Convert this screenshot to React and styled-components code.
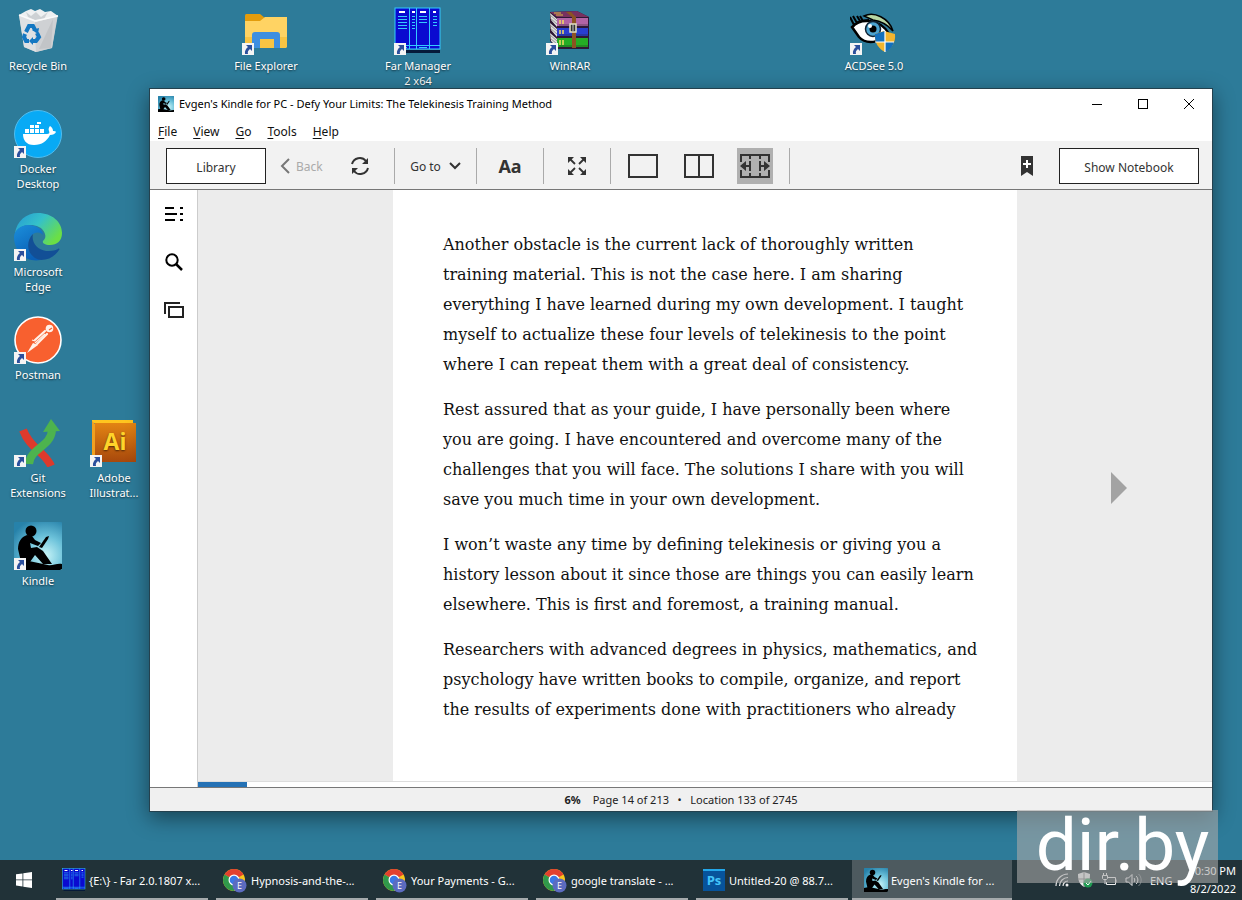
import React from "react";

import styled, { createGlobalStyle } from "styled-components";


const GlobalStyle = createGlobalStyle`
*{
    box-sizing: border-box;
}
body{
    margin: 0;
    font-family: "Noto Sans", "Open Sans", sans-serif;
    font-size: 11px;
}
button{
    font: inherit;
    color: inherit;
    border: none;
    background: none;
    padding: 0;
}
`;

const Desktop = styled.div`
position: relative;
min-height: 100vh;
display: flex;
flex-direction: column;
background: #2d7b99;
overflow: hidden;
`;

const IconGrid = styled.div`
flex: 1;
display: grid;
grid-template-columns: repeat(auto-fill, 76px);
grid-auto-rows: 103px;
`;

const Shortcut = styled.button`
grid-column: ${props => props.$col};
grid-row: ${props => props.$row};
display: flex;
flex-direction: column;
align-items: center;
gap: 3px;
padding-top: 7px;
color: white;
line-height: 15px;
text-align: center;
text-shadow: 0 1px 2px rgba(0, 0, 0, 0.6);
`;

const ShortcutArt = styled.span`
position: relative;
width: 48px;
height: 48px;
svg{
    display: block;
}
`;

const Badge = styled.span`
position: absolute;
left: 0;
bottom: 0;
`;

const AppWindow = styled.section`
position: absolute;
top: 88px;
left: 149px;
right: 29px;
bottom: 88px;
display: flex;
flex-direction: column;
background: white;
border: 1px solid #24414e;
box-shadow: 0 6px 20px rgba(0, 0, 0, 0.45);
`;

const TitleBar = styled.header`
display: flex;
align-items: center;
height: 29px;
padding-left: 8px;
color: black;
h1{
    flex: 1;
    margin: 0 0 0 5px;
    font-size: 11px;
    font-weight: 400;
}
`;

const WindowButton = styled.button`
display: flex;
align-items: center;
justify-content: center;
width: 46px;
height: 29px;
`;

const MenuBar = styled.nav`
display: flex;
align-items: center;
gap: 16px;
height: 23px;
padding: 4px 0 0 8px;
color: #111;
font-size: 12px;
`;

const Mnemonic = styled.span`
text-decoration: underline;
text-underline-offset: 2px;
`;

const Toolbar = styled.div`
display: flex;
align-items: center;
height: 49px;
padding: 2px 13px 0 16px;
background: #f2f2f2;
border-bottom: 1px solid #777;
color: #333;
font-size: 12px;
`;

const ToolGroup = styled.div`
display: flex;
align-items: center;
justify-content: center;
height: 36px;
gap: ${props => props.$gap || 0}px;
min-width: ${props => props.$width || 0}px;
padding: ${props => props.$pad || "0"};
border-right: 1px solid #aaa;
`;

const OutlineButton = styled.button`
width: ${props => props.$width}px;
height: 36px;
padding-top: 2px;
background: white;
border: 1px solid #222;
`;

const ToolButton = styled.button`
display: flex;
align-items: center;
justify-content: center;
gap: 8px;
min-width: 36px;
height: 36px;
background: ${props => (props.$active ? "#b0b0b0" : "transparent")};
`;

const BackButton = styled(ToolButton)`
justify-content: flex-start;
gap: 6px;
width: 48px;
color: #aaa;
`;

const FontButton = styled(ToolButton)`
font-size: 18px;
font-weight: 700;
`;

const ToolEnd = styled.div`
display: flex;
align-items: center;
gap: 14px;
margin-left: auto;
`;

const Reader = styled.div`
flex: 1;
display: flex;
min-height: 0;
`;

const SideBar = styled.aside`
display: flex;
flex-direction: column;
align-items: center;
gap: 12px;
width: 48px;
padding-top: 6px;
border-right: 1px solid #ccc;
`;

const ReaderMain = styled.div`
flex: 1;
display: flex;
flex-direction: column;
`;

const BookArea = styled.div`
flex: 1;
display: grid;
grid-template-columns: 1fr 624px 1fr;
background: #ececec;
border-bottom: 1px solid #ddd;
`;

const BookPage = styled.article`
grid-column: 2;
padding: 40px 50px;
background: white;
color: #111;
font-family: "DejaVu Serif", serif;
font-size: 16px;
line-height: 30px;
white-space: nowrap;
p{
    margin: 0 0 15px;
}
`;

const Line = styled.span`
display: block;
`;

const NextPage = styled.button`
align-self: center;
justify-self: center;
width: 32px;
height: 32px;
margin: 4px 0 0 8px;
svg{
    display: block;
    margin: auto;
}
`;

const ProgressTrack = styled.div`
height: 5px;
background: white;
`;

const ProgressFill = styled.div`
width: 49px;
height: 5px;
background: #2471b5;
`;

const StatusBar = styled.footer`
display: flex;
align-items: center;
justify-content: center;
gap: 12px;
height: 24px;
background: #f0f0f0;
border-top: 1px solid #777;
color: #222;
`;

const TaskBar = styled.footer`
display: flex;
height: 40px;
background: #213238;
color: white;
`;

const StartButton = styled.button`
display: flex;
align-items: center;
justify-content: center;
width: 48px;
margin-right: 4px;
`;

const TaskButton = styled.button`
display: flex;
align-items: center;
width: 160px;
background: ${props => (props.$active ? "#4d5a5f" : "transparent")};
padding: ${props => (props.$active ? "0" : "0 4px")};
`;

const TaskInner = styled.span`
flex: 1;
display: flex;
align-items: center;
gap: 3px;
height: 40px;
padding: 2px 0 0 ${props => (props.$active ? 12 : 6)}px;
border-bottom: 2px solid #a5aaac;
white-space: nowrap;
svg{
    flex: none;
}
`;

const Tray = styled.div`
display: flex;
align-items: center;
gap: 8px;
margin-left: auto;
padding-right: 6px;
`;

const Clock = styled.div`
display: flex;
flex-direction: column;
align-items: flex-end;
margin-left: 8px;
line-height: 18px;
`;

const Watermark = styled.div`
position: absolute;
right: 24px;
bottom: 17px;
width: 201px;
height: 73px;
padding-left: 10px;
background: rgba(169, 169, 169, 0.6);
color: white;
font-family: Roboto, sans-serif;
font-size: 73px;
line-height: 70px;
text-align: center;
`;


const ShortcutArrow = () => (
    <svg width="12" height="12" viewBox="0 0 12 12">
        <rect width="12" height="12" fill="#f4f4f4" />
        <path d="M4 2h6v6L8 6C6 7.5 5.5 9 6 11H3C2.5 8 4 5.500 6 4z" fill="#2b4f9c" />
    </svg>
);

const RecycleArt = () => (
    <svg width="48" height="48" viewBox="0 0 48 48">
        <path d="M5 8l39 0-6 33-16 4-12-5z" fill="#c9cccf" />
        <path d="M5 8l16 5 1 32-12-5z" fill="#dfe1e3" />
        <path d="M21 13l22-4-5 32-16 4z" fill="#cfd1d4" />
        <path d="M25 42l14-30-2 29z" fill="#bcbfc2" opacity=".7" />
        <path d="M5 8l7-4 5-2 4 2 5-2 5 3 6-1 7 5-22 6z" fill="#eef0f1" />
        <path d="M12 5l5 4 5-4 5 5 7-5-4 7-9 1-7-3z" fill="#cdd1d4" />
        <path d="M5 8l16 6 23-5" fill="none" stroke="#fafafa" strokeWidth="1.400" />
        <g fill="none" stroke="#1578c2" strokeWidth="4">
            <path d="M12 25l3-6h4l2 4" />
            <path d="M23 26l2 4-3 4h-4" />
            <path d="M15 34h-3l-2-4 1-3" />
        </g>
        <path d="M18 23l7-2-1 6zM19 30v8l-4-4z" fill="#1578c2" />
    </svg>
);

const DockerArt = () => (
    <svg width="48" height="48" viewBox="0 0 48 48">
        <circle cx="24" cy="24" r="23.500" fill="#08aaf5" stroke="#4fbdf0" />
        <path d="M9 24h24c2 0 3-1 2-3-1-2 0-4 1-5 2 1 3 3 3 5 1 0 3 0 3 1-1 2-3 3-6 3-3 6-8 10-16 10-8 0-11-5-11-11z" fill="white" />
        <g fill="white">
            <rect x="11" y="19" width="4" height="4" />
            <rect x="16" y="19" width="4" height="4" />
            <rect x="21" y="19" width="4" height="4" />
            <rect x="26" y="19" width="4" height="4" />
            <rect x="16" y="15" width="4" height="3" />
            <rect x="21" y="15" width="4" height="3" />
            <rect x="23" y="12" width="4" height="2" />
        </g>
    </svg>
);

const EdgeArt = () => (
    <svg width="48" height="48" viewBox="0 0 48 48">
        <defs>
            <linearGradient id="edgeTop" x1="0" y1="0" x2="1" y2="0.6">
                <stop offset="0" stopColor="#2499d5" />
                <stop offset="0.500" stopColor="#35c1c9" />
                <stop offset="1" stopColor="#6bdf45" />
            </linearGradient>
            <linearGradient id="edgeLeft" x1="0" y1="0" x2="0.5" y2="1">
                <stop offset="0" stopColor="#1b8fdb" />
                <stop offset="1" stopColor="#0a5fb5" />
            </linearGradient>
        </defs>
        <path d="M1 20C3 8 12 0 24 0c14 0 24 9 24 20 0 8-5 12-12 12-5 0-8-2-7-4 2-2 3-4 2-7C29 14 22 12 16 12 9 12 4 15 1 20z" fill="url(#edgeTop)" />
        <path d="M0 24c0-7 7-12 14-12 8 0 15 4 15 10-2-3-8-4-12 1-5 7-1 18 10 24C11 50 0 38 0 24z" fill="url(#edgeLeft)" />
        <path d="M19 21c-9 9-5 24 8 26 8 0 14-4 18-10 1-1 0-2-1-1-4 2-8 2-12 2-9-1-15-9-13-17z" fill="#124f96" />
    </svg>
);

const PostmanArt = () => (
    <svg width="48" height="48" viewBox="0 0 48 48">
        <circle cx="24" cy="24" r="23" fill="#f8602f" stroke="white" strokeWidth="1.600" />
        <circle cx="35.500" cy="12.500" r="3.800" fill="#fff1e8" />
        <path d="M35 14l3-2" stroke="#f8602f" strokeWidth="1.200" />
        <g stroke="#fff1e8" strokeWidth="2.200" strokeLinecap="round">
            <path d="M31 15L21 24" />
            <path d="M33 18L23 28" />
        </g>
        <path d="M31 18L21 27M18 24l3 1" stroke="#fff1e8" strokeWidth="1.200" />
        <path d="M19 27l5 2-11 8z" fill="#fff1e8" />
    </svg>
);

const GitArt = () => (
    <svg width="48" height="48" viewBox="0 0 48 48">
        <path d="M9 11c5 13 13 18 19 24 4 4 7 7 9 12" fill="none" stroke="#dd3a2c" strokeWidth="8" />
        <path d="M15 45c1-16 22-17 23-34" fill="none" stroke="#4db34e" strokeWidth="8" />
        <path d="M29 13l8-13 9 12z" fill="#4db34e" />
    </svg>
);

const IllustratorArt = () => (
    <svg width="48" height="48" viewBox="0 0 48 48">
        <defs>
            <linearGradient id="aiFill" x1="0" y1="0" x2="0" y2="1">
                <stop offset="0" stopColor="#e38413" />
                <stop offset="1" stopColor="#a7480c" />
            </linearGradient>
        </defs>
        <path d="M2 1h41v3H2z" fill="#ffc51f" />
        <path d="M2 2l3 3v38l-3-3z" fill="#f0a020" />
        <rect x="5" y="4" width="41" height="39" fill="url(#aiFill)" />
        <text x="25" y="31" textAnchor="middle" fontFamily="Open Sans" fontWeight="700" fontSize="23" fill="#ffd42a">Ai</text>
    </svg>
);

const KindleArt = ({ size = 48 }) => (
    <svg width={size} height={size} viewBox="0 0 48 48">
        <defs>
            <radialGradient id="kindleSky" cx="0.65" cy="0.7" r="0.8">
                <stop offset="0" stopColor="#c9f5f8" />
                <stop offset="0.500" stopColor="#6cc2da" />
                <stop offset="1" stopColor="#2782aa" />
            </radialGradient>
        </defs>
        <rect width="48" height="48" rx="1" fill="url(#kindleSky)" />
        <circle cx="17" cy="9" r="5.500" fill="black" />
        <path d="M13 13C7 15 4 20 4 27l3 13h9l5-7 8 9h9l-9-13-6-4-6 1-1-5 8 3 3-3-6-3-3-4z" fill="black" />
        <path d="M25 25l7-10 3-1-1 3-6 9z" fill="black" />
        <path d="M0 40l10-2 24 5c4 1 9-2 14-1v5l-2 1H0z" fill="black" />
    </svg>
);

const ExplorerArt = () => (
    <svg width="48" height="48" viewBox="0 0 48 48">
        <path d="M3 9c0-2 1-2 2-2h13l5 4-3 7H3z" fill="#e39c0c" />
        <path d="M3 14h15l5-4h22v29c0 1-1 2-2 2H3z" fill="#ffd363" />
        <path d="M3 30h42v9c0 1-1 2-2 2H3z" fill="#f8c443" />
        <path d="M10 41V28c0-2 1-3 3-3h22c2 0 3 1 3 3v13h-6v-9H18v9z" fill="#3f8fe0" />
    </svg>
);

const FarArt = ({ size = 48 }) => (
    <svg width={size} height={size} viewBox="0 0 48 48">
        <path d="M3 43h43v3H3z" fill="#061a3a" />
        <rect x="1" y="1" width="45" height="41" fill="#0a0ad0" stroke="#35c9ff" />
        <g stroke="#35c9ff" fill="none">
            <path d="M15.500 1v41M22.500 1v41M35.500 1v41M1 38.500h45" />
            <path d="M4 9.500h9M4 12.500h9M4 15.500h9M4 18.500h9M4 21.500h9M18 9.500h3M18 12.500h3M18 15.500h3M18 18.500h3M18 21.500h3M25 9.500h8M25 12.500h8M25 15.500h8M39 9.500h4M39 12.500h4M39 15.500h4M39 18.500h4" />
            <path d="M4 40.500h9M25 40.500h8" />
        </g>
        <path d="M5 5h6M18 5h3M26 5h6M39 5h3" stroke="white" strokeWidth="2" />
    </svg>
);

const WinRarArt = () => (
    <svg width="48" height="48" viewBox="0 0 48 48">
        <path d="M4 5l27-1 12 6v32H11L4 34z" fill="#2d1835" />
        <path d="M4 5l27-1 12 6H11z" fill="#78305f" />
        <path d="M4 6l7 6v8l-6-7zM4 16l7 6v8l-6-7zM4 26l7 6v8l-6-6z" fill="#dedede" />
        <path d="M4 8l7 6M4 11l7 6M4 18l7 6M4 21l7 6M4 28l7 6M4 31l7 6" stroke="#777" strokeWidth=".7" />
        <rect x="11" y="11" width="31" height="8" fill="#b264a5" />
        <rect x="11" y="21" width="31" height="8" fill="#293fd0" />
        <rect x="11" y="31" width="31" height="9" fill="#25ad25" />
        <path d="M13 18h29M13 28h29M13 39h29" stroke="#222" strokeOpacity=".5" />
        <path d="M14 13v4M17 13v4M14 23v4M17 23v4M14 33v5M17 33v5" stroke="#f4dc62" strokeWidth="1.500" />
        <path d="M20 5l6 5v31h4V10l-5-5z" fill="#8c5322" />
        <rect x="24" y="17" width="6" height="8" fill="#333" stroke="#e6e3c4" strokeWidth="1.500" />
        <path d="M27 17v7" stroke="#ccc" />
        <path d="M8 6h7M10 8h7" stroke="#d9bd44" />
    </svg>
);

const AcdArt = () => (
    <svg width="48" height="48" viewBox="0 0 48 48">
        <path d="M14 9c10-5 25 2 29 15-6-7-12-10-20-11z" fill="#b8d6a2" stroke="black" strokeWidth="1.500" />
        <path d="M2 20c8-9 28-9 37 7-9 9-23 11-30 3z" fill="white" stroke="black" strokeWidth="2.500" />
        <circle cx="23" cy="22" r="7.500" fill="#4ba3d0" stroke="#123" strokeWidth="1.500" />
        <circle cx="23" cy="22" r="3.500" fill="black" />
        <circle cx="20" cy="19" r="2" fill="white" />
        <path d="M3 20C6 14 12 13 19 13M4 18L0 10M7 16L3 9M10 14L7 9M13 14l-3-5" stroke="black" strokeWidth="2" fill="none" />
        <path d="M25 27l9-3 11 3c1 9-4 15-10 18-6-3-11-9-10-18z" fill="#f3b52f" />
        <path d="M25 27l10-3v11h-9c-1-2-1-5-1-8zM35 35h9c-1 4-4 8-9 10z" fill="#1470bd" />
        <path d="M35 24v21M25 35h19" stroke="white" strokeWidth="1.200" />
    </svg>
);

const ChromeArt = () => (
    <svg width="26" height="26" viewBox="0 0 26 26">
        <circle cx="12" cy="13" r="11" fill="#f8c51c" />
        <path d="M12 13L2.500 7.500a11 11 0 0 1 19 0z" fill="#e2402f" />
        <path d="M12 13L2.500 7.500A11 11 0 0 0 12 24l4-8z" fill="#30994b" />
        <circle cx="12" cy="13" r="5.500" fill="white" />
        <circle cx="12" cy="13" r="4.300" fill="#3b78e7" />
        <circle cx="17.500" cy="18.500" r="7" fill="#5c6bc0" />
        <text x="17.500" y="22" textAnchor="middle" fontFamily="Open Sans" fontSize="9" fill="white">E</text>
    </svg>
);

const PhotoshopArt = () => (
    <svg width="24" height="24" viewBox="0 0 24 24">
        <rect x="1" y="1" width="22" height="22" fill="#07539b" />
        <path d="M1 1h22v2H1z" fill="#23a7ea" />
        <text x="12" y="17" textAnchor="middle" fontFamily="Open Sans" fontWeight="700" fontSize="13" fill="#43c5fa">Ps</text>
    </svg>
);

const shortcuts = [
    { label: ["Recycle Bin"], Art: RecycleArt, col: 1, row: 1, real: true },
    { label: ["File Explorer"], Art: ExplorerArt, col: 4, row: 1 },
    { label: ["Far Manager", "2 x64"], Art: FarArt, col: 6, row: 1 },
    { label: ["WinRAR"], Art: WinRarArt, col: 8, row: 1 },
    { label: ["ACDSee 5.0"], Art: AcdArt, col: 12, row: 1 },
    { label: ["Docker", "Desktop"], Art: DockerArt, col: 1, row: 2 },
    { label: ["Microsoft", "Edge"], Art: EdgeArt, col: 1, row: 3 },
    { label: ["Postman"], Art: PostmanArt, col: 1, row: 4 },
    { label: ["Git", "Extensions"], Art: GitArt, col: 1, row: 5 },
    { label: ["Adobe", "Illustrat..."], Art: IllustratorArt, col: 2, row: 5 },
    { label: ["Kindle"], Art: KindleArt, col: 1, row: 6 }
];

const paragraphs = [
    [
        "Another obstacle is the current lack of thoroughly written",
        "training material. This is not the case here. I am sharing",
        "everything I have learned during my own development. I taught",
        "myself to actualize these four levels of telekinesis to the point",
        "where I can repeat them with a great deal of consistency."
    ],
    [
        "Rest assured that as your guide, I have personally been where",
        "you are going. I have encountered and overcome many of the",
        "challenges that you will face. The solutions I share with you will",
        "save you much time in your own development."
    ],
    [
        "I won’t waste any time by defining telekinesis or giving you a",
        "history lesson about it since those are things you can easily learn",
        "elsewhere. This is first and foremost, a training manual."
    ],
    [
        "Researchers with advanced degrees in physics, mathematics, and",
        "psychology have written books to compile, organize, and report",
        "the results of experiments done with practitioners who already"
    ]
];

const tasks = [
    { label: "{E:\\} - Far 2.0.1807 x...", art: <FarArt size={24} /> },
    { label: "Hypnosis-and-the-...", art: <ChromeArt /> },
    { label: "Your Payments - G...", art: <ChromeArt /> },
    { label: "google translate - ...", art: <ChromeArt /> },
    { label: "Untitled-20 @ 88.7...", art: <PhotoshopArt /> },
    { label: "Evgen's Kindle for ...", art: <KindleArt size={24} />, active: true }
];

const KindleToolbar = () => (
    <Toolbar>
        <ToolGroup $gap={14} $pad="0 16px 0 0">
            <OutlineButton $width={100}>Library</OutlineButton>
            <BackButton disabled>
                <svg width="10" height="16" viewBox="0 0 10 16" fill="none" stroke="#777" strokeWidth="2"><path d="M9 1L2 8l7 7" /></svg>
                Back
            </BackButton>
            <ToolButton aria-label="Sync">
                <svg width="20" height="20" viewBox="0 0 20 20">
                    <path d="M2 8a8 8 0 0 1 14-3M18 12a8 8 0 0 1-14 3" fill="none" stroke="#333" strokeWidth="2" />
                    <path d="M18 2v6h-6zM2 18v-6h6z" fill="#333" />
                </svg>
            </ToolButton>
        </ToolGroup>
        <ToolGroup $width={82}>
            <ToolButton>
                Go to
                <svg width="12" height="8" viewBox="0 0 12 8" fill="none" stroke="#333" strokeWidth="2"><path d="M1 1l5 5 5-5" /></svg>
            </ToolButton>
        </ToolGroup>
        <ToolGroup $width={67}>
            <FontButton>Aa</FontButton>
        </ToolGroup>
        <ToolGroup $width={67}>
            <ToolButton aria-label="Full screen">
                <svg width="20" height="20" viewBox="0 0 20 20">
                    <path d="M3 3l5 5M17 3l-5 5M3 17l5-5M17 17l-5-5" stroke="#333" strokeWidth="1.800" />
                    <path d="M1 1h6L1 7zM19 1v6l-6-6zM1 19v-6l6 6zM19 19h-6l6-6z" fill="#333" />
                </svg>
            </ToolButton>
        </ToolGroup>
        <ToolGroup $gap={20} $pad="0 16px 0 14px">
            <ToolButton aria-label="Single column">
                <svg width="30" height="24" viewBox="0 0 30 24" fill="none" stroke="#333" strokeWidth="2"><rect x="1" y="1" width="28" height="22" /></svg>
            </ToolButton>
            <ToolButton aria-label="Two columns">
                <svg width="30" height="24" viewBox="0 0 30 24" fill="none" stroke="#333" strokeWidth="2"><path d="M1 1h28v22H1zM15 1v22" /></svg>
            </ToolButton>
            <ToolButton $active aria-label="Fit columns">
                <svg width="30" height="24" viewBox="0 0 30 24" fill="none" stroke="#333" strokeWidth="2">
                    <path d="M1 8V1h28v7M1 16v7h28v-7M3 12h8M19 12h8" />
                    <path d="M10 1v22M20 1v22" strokeDasharray="4 2" />
                    <path d="M0 12l6-5v10zM30 12l-6-5v10z" fill="#333" stroke="none" />
                </svg>
            </ToolButton>
        </ToolGroup>
        <ToolEnd>
            <ToolButton aria-label="Bookmark">
                <svg width="12" height="20" viewBox="0 0 12 20">
                    <path d="M0 0h12v20l-6-4-6 4z" fill="#333" />
                    <path d="M6 4v8M2 8h8" stroke="white" strokeWidth="2" />
                </svg>
            </ToolButton>
            <OutlineButton $width={140}>Show Notebook</OutlineButton>
        </ToolEnd>
    </Toolbar>
);

const KindleWindow = () => (
    <AppWindow>
        <TitleBar>
            <KindleArt size={16} />
            <h1>Evgen's Kindle for PC - Defy Your Limits: The Telekinesis Training Method</h1>
            <WindowButton aria-label="Minimize">
                <svg width="10" height="10"><path d="M0 5.500h10" stroke="black" /></svg>
            </WindowButton>
            <WindowButton aria-label="Maximize">
                <svg width="10" height="10"><rect x="0.500" y="0.500" width="9" height="9" fill="none" stroke="black" /></svg>
            </WindowButton>
            <WindowButton aria-label="Close">
                <svg width="10" height="10"><path d="M0 0l10 10M10 0L0 10" stroke="black" /></svg>
            </WindowButton>
        </TitleBar>
        <MenuBar>
            {["File", "View", "Go", "Tools", "Help"].map(item => (
                <button key={item}><Mnemonic>{item[0]}</Mnemonic>{item.slice(1)}</button>
            ))}
        </MenuBar>
        <KindleToolbar />
        <Reader>
            <SideBar>
                <ToolButton aria-label="Contents">
                    <svg width="18" height="14" viewBox="0 0 18 14" stroke="black" strokeWidth="2"><path d="M0 1h9M0 7h12M0 13h10M15 1h3M15 7h3M15 13h3" /></svg>
                </ToolButton>
                <ToolButton aria-label="Search">
                    <svg width="18" height="18" viewBox="0 0 18 18" fill="none" stroke="black" strokeWidth="2"><circle cx="7" cy="7" r="5.700" /><path d="M11 11l6 6" strokeWidth="2.500" /></svg>
                </ToolButton>
                <ToolButton aria-label="Flashcards">
                    <svg width="20" height="16" viewBox="0 0 20 16" fill="none" stroke="#222" strokeWidth="2"><path d="M1 12V1h15" /><rect x="5" y="5" width="14" height="10" /></svg>
                </ToolButton>
            </SideBar>
            <ReaderMain>
                <BookArea>
                    <BookPage>
                        {paragraphs.map(lines => (
                            <p key={lines[0]}>
                                {lines.map(line => <Line key={line}>{line} </Line>)}
                            </p>
                        ))}
                    </BookPage>
                    <NextPage aria-label="Next page">
                        <svg width="16" height="32" viewBox="0 0 16 32"><path d="M0 0l16 16L0 32z" fill="#a3a3a3" /></svg>
                    </NextPage>
                </BookArea>
                <ProgressTrack><ProgressFill /></ProgressTrack>
            </ReaderMain>
        </Reader>
        <StatusBar>
            <strong>6%</strong>
            <span>Page 14 of 213 &nbsp; • &nbsp; Location 133 of 2745</span>
        </StatusBar>
    </AppWindow>
);

const SystemTray = () => (
    <Tray>
        <svg width="14" height="14" viewBox="0 0 14 14" fill="none" stroke="#eee" strokeWidth="1.200">
            <path d="M1 13A12 12 0 0 1 13 1M4.500 13A8.500 8.500 0 0 1 13 4.500M8 13a5 5 0 0 1 5-5" />
            <circle cx="12" cy="12" r="1.500" fill="#eee" stroke="none" />
        </svg>
        <svg width="16" height="16" viewBox="0 0 16 16">
            <path d="M1 2l6-2 6 2c0 6-1 10-6 13C2 12 1 8 1 2z" fill="#eee" />
            <path d="M7 0v15M1 7h12" stroke="#777" />
            <circle cx="11" cy="11" r="4.500" fill="#1f9c52" />
            <path d="M9 11l2 2 3-4" fill="none" stroke="white" />
        </svg>
        <svg width="16" height="14" viewBox="0 0 16 14" fill="none" stroke="#eee">
            <path d="M6 4.500h8.500v7h-9V9M15 6.500v3M1.500 2.500h5v3l-1 1h-3l-1-1zM2.500 0v2M5.500 0v2M4 7v4" />
        </svg>
        <svg width="17" height="14" viewBox="0 0 17 14" fill="none" stroke="#eee">
            <path d="M1 5h2.500L7 1.500v11L3.500 9H1z" />
            <path d="M9 5c1 1 1 3 0 4M11 3c2.500 2 2.500 6 0 8" />
            <path d="M13.500 1c3.500 3 3.500 9 0 12" opacity=".4" />
        </svg>
        <span>ENG</span>
        <Clock>
            <span>10:30 PM</span>
            <span>8/2/2022</span>
        </Clock>
    </Tray>
);

const App = () => (
    <Desktop>
        <GlobalStyle />
        <IconGrid>
            {shortcuts.map(({ label, Art, col, row, real }) => (
                <Shortcut key={label[0]} $col={col} $row={row}>
                    <ShortcutArt>
                        <Art />
                        {!real && <Badge><ShortcutArrow /></Badge>}
                    </ShortcutArt>
                    <span>
                        {label.map(line => <Line key={line}>{line}</Line>)}
                    </span>
                </Shortcut>
            ))}
        </IconGrid>
        <KindleWindow />
        <TaskBar>
            <StartButton aria-label="Start">
                <svg width="16" height="16" viewBox="0 0 16 16" fill="white">
                    <path d="M0 2.300l6.500-.9v6.100H0zM7.300 1.200L16 0v7.500H7.300zM0 8.300h6.500v6.200L0 13.600zM7.300 8.300H16V16l-8.700-1.200z" />
                </svg>
            </StartButton>
            {tasks.map(task => (
                <TaskButton key={task.label} $active={task.active}>
                    <TaskInner $active={task.active}>
                        {task.art}
                        {task.label}
                    </TaskInner>
                </TaskButton>
            ))}
            <SystemTray />
        </TaskBar>
        <Watermark>dir.by</Watermark>
    </Desktop>
);

export default App;
